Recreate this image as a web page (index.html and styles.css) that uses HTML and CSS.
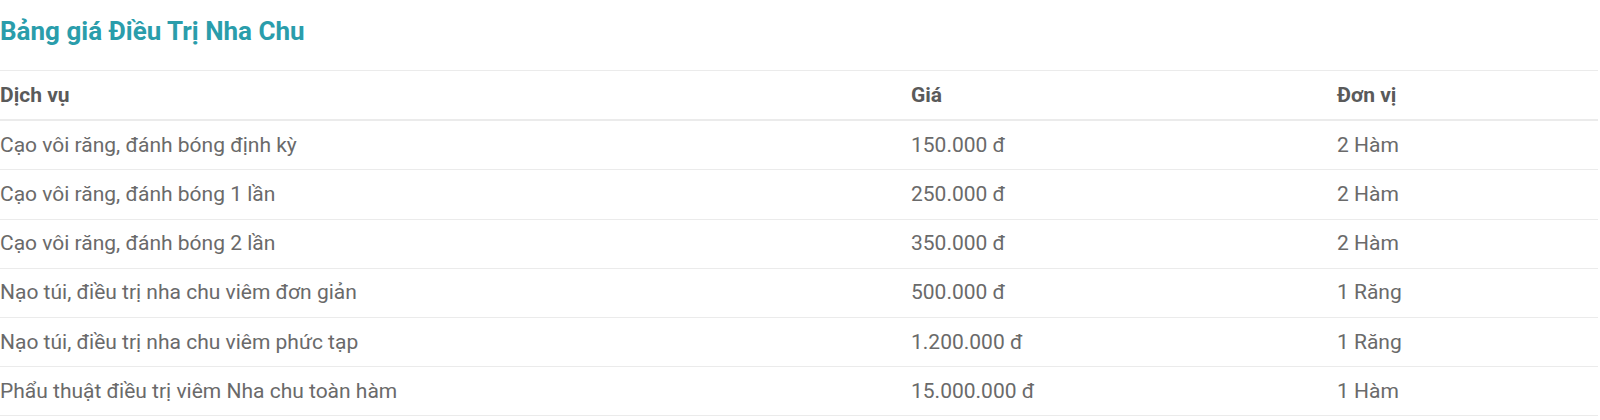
FILE: index.html
```html
<!DOCTYPE html>
<html lang="vi">
<head>
<meta charset="utf-8">
<link rel="stylesheet" href="styles.css">
</head>
<body>
<h2 class="title">Bảng giá Điều Trị Nha Chu</h2>
<table class="price">
  <thead>
    <tr><th class="c1">Dịch vụ</th><th class="c2">Giá</th><th class="c3">Đơn vị</th></tr>
  </thead>
  <tbody>
    <tr><td>Cạo vôi răng, đánh bóng định kỳ</td><td>150.000 đ</td><td>2 Hàm</td></tr>
    <tr><td>Cạo vôi răng, đánh bóng 1 lần</td><td>250.000 đ</td><td>2 Hàm</td></tr>
    <tr><td>Cạo vôi răng, đánh bóng 2 lần</td><td>350.000 đ</td><td>2 Hàm</td></tr>
    <tr><td>Nạo túi, điều trị nha chu viêm đơn giản</td><td>500.000 đ</td><td>1 Răng</td></tr>
    <tr><td>Nạo túi, điều trị nha chu viêm phức tạp</td><td>1.200.000 đ</td><td>1 Răng</td></tr>
    <tr><td>Phẩu thuật điều trị viêm Nha chu toàn hàm</td><td>15.000.000 đ</td><td>1 Hàm</td></tr>
  </tbody>
</table>
</body>
</html>
```

FILE: styles.css
```css
html, body {
  margin: 0;
  padding: 0;
  background: #fff;
}
body {
  font-family: Roboto, "Liberation Sans", sans-serif;
  color: #666;
}
.title {
  margin: 0;
  padding-top: 15px;
  height: 70px;
  box-sizing: border-box;
  font-size: 26px;
  line-height: 32px;
  font-weight: 700;
  color: #2a9dab;
}
.price {
  width: 1598px;
  border-collapse: collapse;
  table-layout: fixed;
  font-size: 21px;
}
.price th, .price td {
  text-align: left;
  padding: 11.6px 0 11.6px 0;
  line-height: 25px;
  border-top: 1px solid #ebebeb;
  vertical-align: middle;
}
.price th {
  font-weight: 700;
  color: #5a5a5a;
  border-bottom: 2px solid #ebebeb;
}
.price td {
  color: #6a6a6a;
}
.price tbody tr:last-child td {
  border-bottom: 1px solid #ebebeb;
}
.c1 { width: 911px; }
.c2 { width: 426px; }
.c3 { width: auto; }
```
